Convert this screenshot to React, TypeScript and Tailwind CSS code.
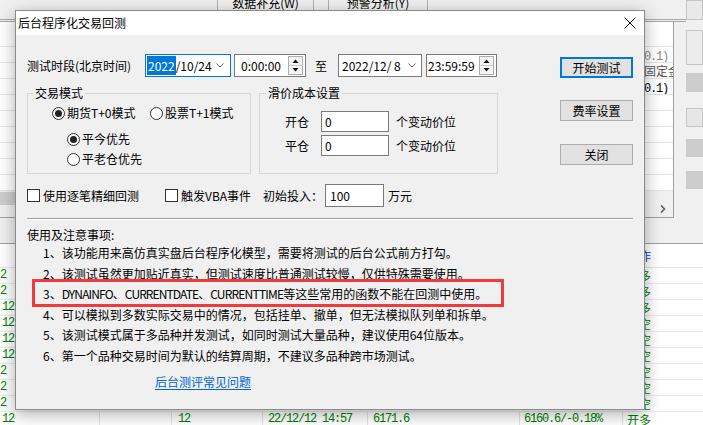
import React from "react";

const MONO = "font-['Liberation_Mono',monospace] tracking-[-1.2px]";

function Radio({ checked, label, className = "" }: { checked?: boolean; label: string; className?: string }) {
  return (
    <span className={`flex items-center gap-[2px] ${className}`}>
      <span className="w-[13px] h-[13px] rounded-full border border-[#333333] bg-white flex items-center justify-center shrink-0">
        {checked && <span className="w-[7px] h-[7px] rounded-full bg-[#222222]" />}
      </span>
      <span className="leading-[16px]">{label}</span>
    </span>
  );
}

function CheckBox() {
  return <span className="w-[13px] h-[13px] border border-[#333333] bg-white shrink-0" />;
}

function Chevron() {
  return (
    <svg width="8" height="5" viewBox="0 0 8 5" className="shrink-0">
      <path d="M0.5 0.5 L4 4 L7.5 0.5" fill="none" stroke="#606060" strokeWidth="1" />
    </svg>
  );
}

function Spin() {
  return (
    <svg width="15" height="19" viewBox="0 0 15 19" className="shrink-0">
      <rect x="0.5" y="0.5" width="14" height="18" fill="#f4f4f4" stroke="#adadad" />
      <line x1="1" y1="9.5" x2="14" y2="9.5" stroke="#c8c8c8" />
      <path d="M4.5 7 L10.5 7 L7.5 3.5 Z" fill="#111" />
      <path d="M4.5 12 L10.5 12 L7.5 15.5 Z" fill="#111" />
    </svg>
  );
}

function Button({ label, primary, className = "" }: { label: string; primary?: boolean; className?: string }) {
  return (
    <div
      className={`w-[73px] h-[21px] bg-[#e1e1e1] flex items-center justify-center leading-[16px] ${
        primary ? "border-2 border-[#0078d7]" : "border border-[#adadad]"
      } ${className}`}
    >
      {label}
    </div>
  );
}

function Background() {
  const upperRows = Array.from({ length: 9 });
  const col1 = ["2", "2", "12", "12", "12", "12", "2", "2", "2"];
  const col7 = ["开多", "开多", "开多", "平空", "平空", "平空", "平空", "平空", "平空"];
  return (
    <div className="flex flex-col w-[703px] h-[425px]">
      {/* upper area */}
      <div className="flex h-[218px] shrink-0">
        <div className="flex flex-col w-[686px]">
          {/* toolbar */}
          <div className="flex h-[22px] shrink-0 border-b-[3px] border-double border-[#a8a8a8]">
            <div className="w-[217px]" />
            <div className="w-[97px] border-x border-[#b0b0b0] flex justify-center">
              <span className="leading-[12px] -mt-[3px]">数据补充(W)</span>
            </div>
            <div className="w-[14px]" />
            <div className="w-[100px] border-x border-[#b0b0b0] flex justify-center">
              <span className="leading-[12px] -mt-[3px]">预警分析(Y)</span>
            </div>
          </div>
          {/* grid */}
          <div className="flex flex-1">
            <div className="w-[674px] flex flex-col bg-white border-r border-b border-[#a0a0a0]">
              <div className="h-[25px] border-b border-[#e3e3e3] shrink-0" />
              {upperRows.map((_, i) => (
                <div key={i} className="h-[16px] border-b border-[#e3e3e3] flex justify-end shrink-0">
                  <div className="w-[29px] overflow-hidden whitespace-nowrap leading-[15px]">
                    {i === 0 && <span className={`text-[#8a8a8a] ${MONO}`}>0.1)</span>}
                    {i === 1 && <span className="text-[#555555]">固定金额</span>}
                    {i === 2 && <span className={MONO}>0.1)</span>}
                  </div>
                </div>
              ))}
              <div className="flex-1 bg-[#f0f0f0] flex items-start">
                <div className="w-[300px] h-[13px] mt-[1px] bg-[#cdcdcd]" />
                <div className="flex-1" />
                <svg width="6" height="8" viewBox="0 0 6 8" className="mt-[14px] mr-[7px]">
                  <path d="M1 0.5 L4.5 4 L1 7.5" fill="none" stroke="#606060" strokeWidth="1.6" />
                </svg>
              </div>
            </div>
            <div className="flex-1" />
          </div>
        </div>
        {/* right column buttons */}
        <div className="w-[17px] flex flex-col">
          <div className="h-[20px] bg-[#e9e9e9] border border-[#c6c6c6]" />
          <div className="mt-[10px] h-[35px] bg-[#ececec] border border-[#c6c6c6]" />
          <div className="mt-[8px] h-[19px] bg-[#cccccc]" />
          <div className="mt-[16px] h-[19px] bg-[#e6e6e6] border border-[#c6c6c6]" />
          <div className="mt-[12px] h-[18px] bg-[#cccccc]" />
          <div className="mt-[14px] h-[18px] bg-[#cccccc]" />
        </div>
      </div>
      {/* lower area */}
      <div className="h-[25px] shrink-0 bg-[#f0f0f0]" />
      <div className="flex-1 bg-white border-t border-[#a0a0a0] flex flex-col">
        <div className="h-[24px] border-b border-[#e3e3e3] flex shrink-0">
          <div className="w-[623px]" />
          <div className="pl-[4px] leading-[23px] text-[#0040c0]">动作</div>
        </div>
        {col1.map((c, i) => (
          <div key={i} className="h-[16px] border-b border-[#e8e8e8] flex text-[#008000] shrink-0">
            <div className={`w-[623px] leading-[15px] ${c === "2" ? "pl-0" : "pl-[2px]"} ${MONO}`}>{c}</div>
            <div className="pl-[4px] leading-[15px]">{col7[i]}</div>
          </div>
        ))}
        <div className="h-[16px] flex text-[#008000] shrink-0">
          <div className={`w-[100px] border-r border-[#e3e3e3] pl-[2px] leading-[15px] ${MONO}`}>12</div>
          <div className={`w-[72px] border-r border-[#e3e3e3] leading-[15px] ${MONO}`} />
          <div className={`w-[91px] border-r border-[#e3e3e3] pl-[6px] leading-[15px] ${MONO}`}>12</div>
          <div className={`w-[105px] border-r border-[#e3e3e3] pl-[5px] leading-[15px] whitespace-nowrap ${MONO}`}>22/12/12 14:57</div>
          <div className={`w-[152px] border-r border-[#e3e3e3] pl-[5px] leading-[15px] ${MONO}`}>6171.6</div>
          <div className={`w-[103px] border-r border-[#e3e3e3] pl-[4px] leading-[15px] whitespace-nowrap ${MONO}`}>6160.6/-0.18%</div>
          <div className="pl-[4px] leading-[15px]">开多</div>
        </div>
      </div>
    </div>
  );
}

function Dialog() {
  const notes: React.ReactNode[] = [
    "1、该功能用来高仿真实盘后台程序化模型，需要将测试的后台公式前方打勾。",
    "2、该测试虽然更加贴近真实，但测试速度比普通测试较慢，仅供特殊需要使用。",
    <>
      3、<span className="tracking-[-0.85px]">DYNAINFO</span>、<span className="tracking-[-0.9px]">CURRENTDATE</span>、
      <span className="tracking-[-0.8px]">CURRENTTIME</span>等这些常用的函数不能在回测中使用。
    </>,
    "4、可以模拟到多数实际交易中的情况，包括挂单、撤单，但无法模拟队列单和拆单。",
    "5、该测试模式属于多品种并发测试，如同时测试大量品种，建议使用64位版本。",
    "6、第一个品种交易时间为默认的结算周期，不建议多品种跨市场测试。",
  ];
  return (
    <div className="absolute left-[15px] top-[10px] w-[630px] h-[400px] border border-[#8a8a8a] bg-[#f0f0f0] shadow-[0_4px_16px_rgba(0,0,0,0.32)] flex flex-col">
      {/* title bar */}
      <div className="h-[24px] bg-white flex items-center justify-between shrink-0">
        <span className="pl-[2px] leading-[16px]">后台程序化交易回测</span>
        <svg width="12" height="12" viewBox="0 0 12 12" className="mr-[8px]">
          <path d="M0.5 0.5 L11.5 11.5 M11.5 0.5 L0.5 11.5" stroke="#111" strokeWidth="1" />
        </svg>
      </div>
      {/* body */}
      <div className="flex-1 px-[11px] flex flex-col">
        <div className="flex">
          <div className="w-[471px] flex flex-col">
            {/* row 1 */}
            <div className="mt-[19px] h-[23px] flex items-center whitespace-nowrap">
              <span className="w-[118px] leading-[16px]">测试时段(北京时间)</span>
              <div className="w-[86px] h-[23px] border border-[#0078d7] bg-white flex items-center pl-[1px]">
                <span className="bg-[#0078d7] text-white h-[19px] leading-[19px] px-[1px]">2022</span>
                <span className="leading-[19px]">/10/24</span>
                <span className="ml-auto mr-[6px] flex"><Chevron /></span>
              </div>
              <div className="ml-[3px] w-[72px] h-[23px] border border-[#7a7a7a] bg-white flex items-center pl-[6px]">
                <span className="leading-[19px]">0:00:00</span>
                <span className="ml-auto mr-[2px] flex"><Spin /></span>
              </div>
              <span className="ml-[9px] mr-[11px] leading-[16px]">至</span>
              <div className="w-[84px] h-[23px] border border-[#7a7a7a] bg-white flex items-center pl-[3px]">
                <span className="leading-[19px]">2022/12/&nbsp;8</span>
                <span className="ml-auto mr-[5px] flex"><Chevron /></span>
              </div>
              <div className="ml-[4px] w-[71px] h-[23px] border border-[#7a7a7a] bg-white flex items-center pl-[1px]">
                <span className="leading-[19px]">23:59:59</span>
                <span className="ml-auto mr-[2px] flex"><Spin /></span>
              </div>
            </div>
            {/* groups */}
            <div className="mt-[8px] flex gap-[8px]">
              <fieldset className="w-[224px] h-[89px] border border-[#d5d5d5]">
                <legend className="ml-[5px] px-[2px] leading-[16px]">交易模式</legend>
                <div className="flex flex-col">
                  <div className="mt-[4px] h-[16px] flex items-center pl-[24px]">
                    <Radio checked label="期货T+0模式" className="w-[98px]" />
                    <Radio label="股票T+1模式" />
                  </div>
                  <div className="mt-[10px] h-[16px] flex items-center pl-[39px]">
                    <Radio checked label="平今优先" />
                  </div>
                  <div className="mt-[4px] h-[16px] flex items-center pl-[39px]">
                    <Radio label="平老仓优先" />
                  </div>
                </div>
              </fieldset>
              <fieldset className="w-[239px] h-[89px] border border-[#d5d5d5]">
                <legend className="ml-[6px] px-[2px] leading-[16px]">滑价成本设置</legend>
                <div className="mt-[10px] pl-[25px] flex flex-col gap-[3px]">
                  <div className="h-[21px] flex items-center">
                    <span className="w-[36px] leading-[16px]">开仓</span>
                    <div className="w-[68px] h-[21px] border border-[#7a7a7a] bg-white pl-[3px] leading-[19px]">0</div>
                    <span className="ml-[7px] leading-[16px]">个变动价位</span>
                  </div>
                  <div className="h-[21px] flex items-center">
                    <span className="w-[36px] leading-[16px]">平仓</span>
                    <div className="w-[68px] h-[21px] border border-[#7a7a7a] bg-white pl-[3px] leading-[19px]">0</div>
                    <span className="ml-[7px] leading-[16px]">个变动价位</span>
                  </div>
                </div>
              </fieldset>
            </div>
            {/* checkbox row */}
            <div className="mt-[10px] h-[23px] flex items-center whitespace-nowrap">
              <div className="w-[138px] flex items-center gap-[3px]">
                <CheckBox />
                <span className="leading-[16px]">使用逐笔精细回测</span>
              </div>
              <div className="w-[98px] flex items-center gap-[3px]">
                <CheckBox />
                <span className="leading-[16px]">触发VBA事件</span>
              </div>
              <span className="w-[62px] leading-[16px]">初始投入：</span>
              <div className="w-[59px] h-[23px] border border-[#7a7a7a] bg-white pl-[4px] leading-[21px]">100</div>
              <span className="ml-[4px] leading-[16px]">万元</span>
            </div>
          </div>
          {/* right buttons */}
          <div className="ml-auto w-[73px] pt-[22px] flex flex-col">
            <Button label="开始测试" primary />
            <Button label="费率设置" className="mt-[22px]" />
            <Button label="关闭" className="mt-[23px]" />
          </div>
        </div>
        {/* separator */}
        <div className="mt-[11px] h-[2px] border-t border-[#a0a0a0] border-b border-b-white" />
        {/* notes */}
        <div className="mt-[7px] leading-[16px]">使用及注意事项:</div>
        <div className="pl-[16px] flex flex-col whitespace-nowrap">
          {notes.map((n, i) => (
            <div key={i} className="relative leading-[20.6px]">
              {n}
              {i === 2 && (
                <div className="absolute -left-[11px] -top-[5px] w-[472px] h-[28px] border-[3px] border-[#ef3b3b]" />
              )}
            </div>
          ))}
        </div>
        <div className="mt-[5px] pl-[128px] leading-[20px]">
          <span className="text-[#0066cc] underline underline-offset-[2px]">后台测评常见问题</span>
        </div>
      </div>
    </div>
  );
}

export default function App() {
  return (
    <div className="relative w-[703px] h-[425px] overflow-hidden bg-[#f0f0f0] font-['Noto_Sans_CJK_SC',sans-serif] text-[12px] text-black">
      <Background />
      <Dialog />
    </div>
  );
}
